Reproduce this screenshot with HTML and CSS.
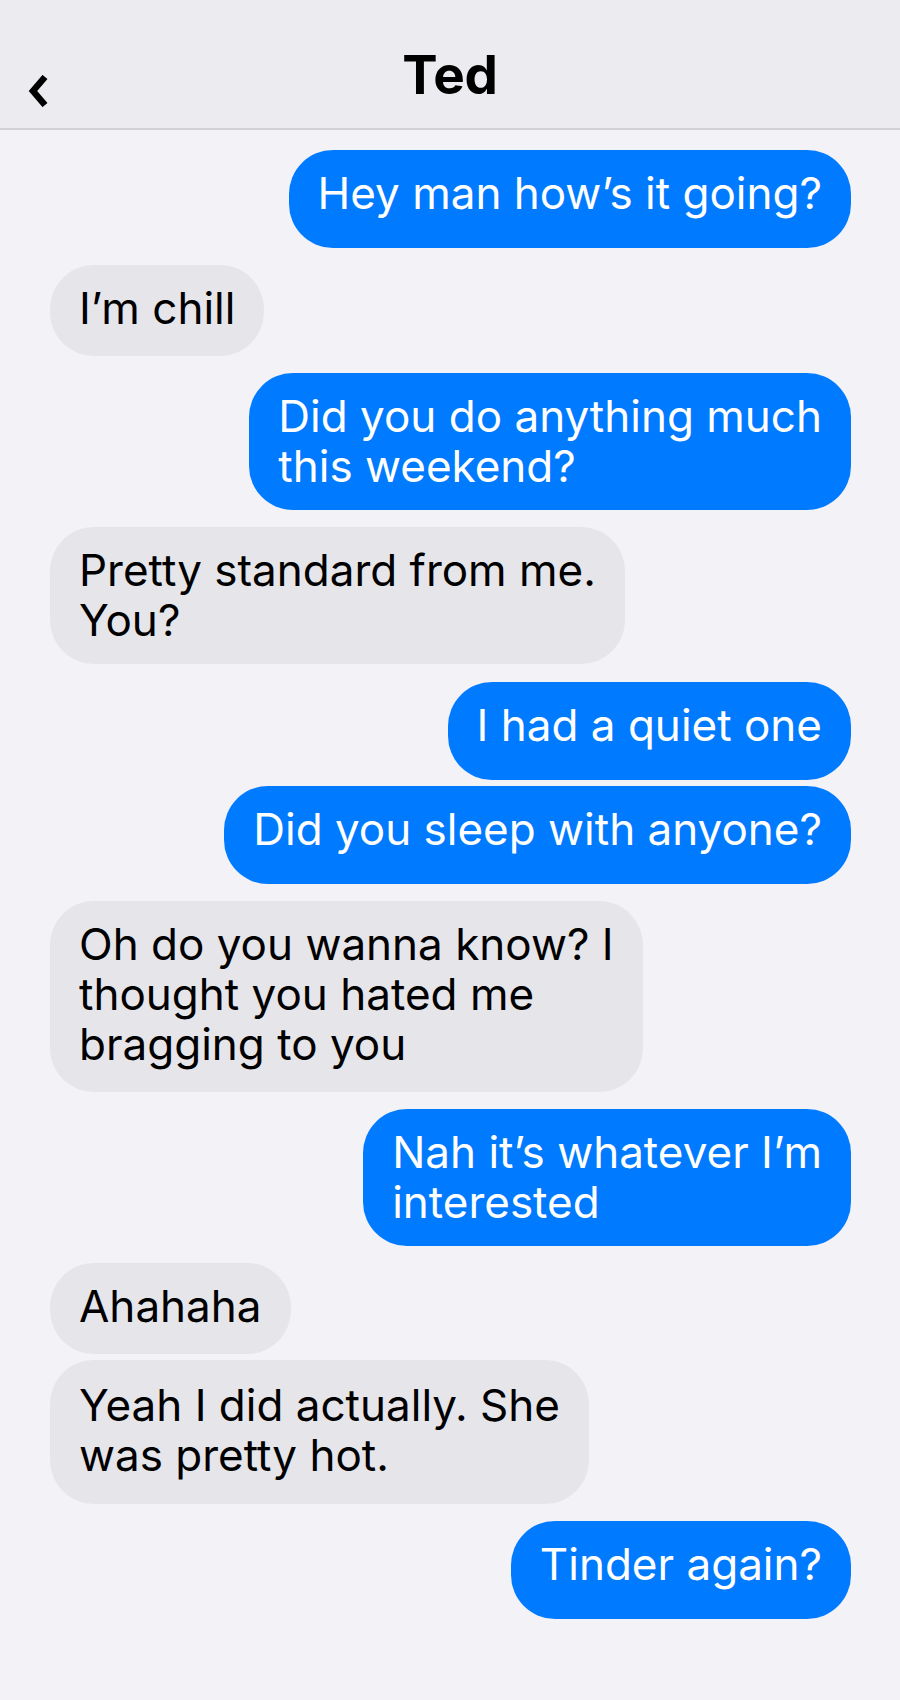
FILE: index.html
```html
<!DOCTYPE html>
<html lang="en">
<head>
<meta charset="utf-8">
<title>Ted</title>
<link rel="stylesheet" href="styles.css">
</head>
<body>
<header class="nav">
  <button class="nav-back" aria-label="Back">
    <svg class="nav-back-icon" viewBox="0 0 24 32" width="24" height="32">
      <polyline points="19,2 7,16 19,30" fill="none" stroke="#000" stroke-width="6.5" stroke-linejoin="miter"/>
    </svg>
  </button>
  <h1 class="nav-title">Ted</h1>
  <span class="nav-spacer"></span>
</header>
<main class="chat">
  <div class="msg out single">Hey man how’s it going?</div>
  <div class="msg in single">I’m chill</div>
  <div class="msg out">Did you do anything much<br>this weekend?</div>
  <div class="msg in">Pretty standard from me.<br>You?</div>
  <div class="msg out single">I had a quiet one</div>
  <div class="msg out single same">Did you sleep with anyone?</div>
  <div class="msg in triple">Oh do you wanna know? I<br>thought you hated me<br>bragging to you</div>
  <div class="msg out">Nah it’s whatever I’m<br>interested</div>
  <div class="msg in single">Ahahaha</div>
  <div class="msg in same roomy">Yeah I did actually. She<br>was pretty hot.</div>
  <div class="msg out single">Tinder again?</div>
</main>
</body>
</html>
```
FILE: styles.css
```css
html, body {
  margin: 0;
  padding: 0;
}

body {
  background: #f2f2f7;
  font-family: Inter, "Noto Sans", "Liberation Sans", sans-serif;
  color: #000;
  width: 900px;
  min-height: 1700px;
}

.nav {
  height: 128px;
  border-bottom: 2px solid #d1d1d6;
  background: #ebebf0;
  display: grid;
  grid-template-columns: 120px 1fr 120px;
  align-items: start;
}

.nav-back {
  margin: 75px 0 0 26px;
  padding: 0;
  border: 0;
  background: none;
  width: 24px;
  height: 32px;
  display: block;
}

.nav-back-icon {
  display: block;
}

.nav-title {
  margin: 45px 0 0;
  text-align: center;
  font-size: 53px;
  line-height: 60px;
  font-weight: 700;
  letter-spacing: -0.3px;
}

.chat {
  display: flex;
  flex-direction: column;
  padding: 20px 49px 40px 50px;
}

.msg {
  max-width: 680px;
  padding: 18px 29px 19px;
  border-radius: 44px;
  font-size: 44px;
  line-height: 50px;
  margin-top: 17.25px;
  box-sizing: border-box;
}

.msg:first-child {
  margin-top: 0;
}

.msg.same {
  margin-top: 6px;
}

.msg.in {
  align-self: flex-start;
  background: #e5e5ea;
  color: #000;
}

.msg.out {
  align-self: flex-end;
  background: #007aff;
  color: #fff;
}

.msg.in.single {
  padding-bottom: 22.5px;
}

.msg.out.single {
  padding-bottom: 30px;
}

.msg.triple {
  padding-bottom: 23px;
}

.msg.roomy {
  padding-top: 20px;
  padding-bottom: 24px;
}
```
